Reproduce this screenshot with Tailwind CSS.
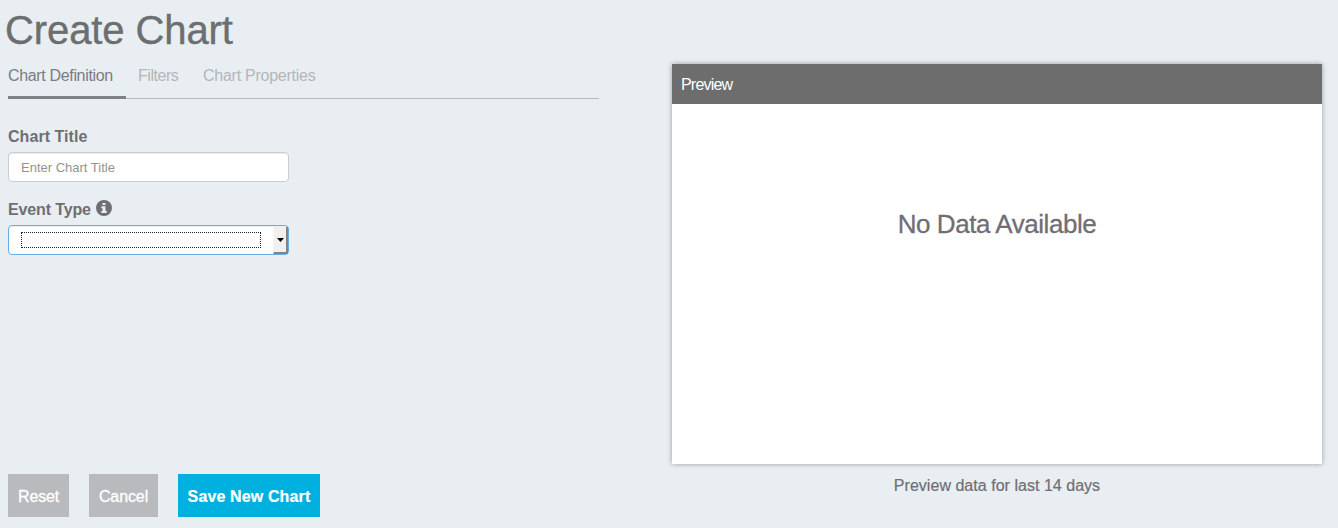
<!DOCTYPE html>
<html lang="en">
<head>
<meta charset="utf-8">
<title>Create Chart</title>
<script src="https://cdn.jsdelivr.net/npm/@tailwindcss/browser@4"></script>
</head>
<body class="h-[528px] overflow-hidden bg-[#e8eef2] font-['Liberation_Sans',Arial,sans-serif] text-base text-[#6f6e73]">
<div class="flex h-full">
  <main class="flex w-[672px] flex-col pl-2">
    <h1 class="-ml-[3px] h-[60px] pt-[5px] text-[40px] leading-[50px] tracking-[-0.1px] whitespace-nowrap text-[#6d6e6f] [-webkit-text-stroke:0.4px_#6d6e6f]">Create Chart</h1>
    <nav class="flex h-[39px] w-[591px] border-b border-[#b5b7ba] leading-[32px] whitespace-nowrap text-[#b5b6ba]">
      <a class="h-[39px] w-[118px] border-b-3 border-[#808187] tracking-[-0.34px] text-[#7b7c82]">Chart Definition</a>
      <a class="ml-3 w-[65px] tracking-[-0.45px]">Filters</a>
      <a class="tracking-[-0.25px]">Chart Properties</a>
    </nav>
    <form class="flex grow flex-col items-start">
      <label class="mt-[26px] h-[27px] leading-6 font-bold tracking-[0.05px]">Chart Title</label>
      <input class="h-[30px] w-[281px] rounded border border-[#cccccc] bg-white px-3 text-[13px] shadow-[inset_0_1px_1px_rgba(0,0,0,0.075)] placeholder:text-[#939393]" placeholder="Enter Chart Title">
      <label class="mt-4 flex h-[27px] gap-[5px] leading-6 font-bold tracking-[-0.13px]">Event Type
        <svg class="mt-[2px] size-4" viewBox="0 0 16 16"><circle cx="8" cy="8" r="8" fill="#6f6e73"/><path d="M6.5 3h3v2h-3zM5.3 6.3h4.2v4.6h1.2v2H5.3v-2h1.2V8.3H5.3z" fill="#e8eef2"/></svg>
      </label>
      <div class="flex h-[30px] w-[281px] items-center justify-between rounded border border-[#66afe9] bg-white pl-3 shadow-[inset_0_1px_1px_rgba(0,0,0,0.075)]">
        <span class="h-4 w-60 border border-dotted border-[#222]"></span>
        <span class="flex h-[27px] w-[15px] items-center justify-center border-r-2 border-b-2 border-[#848484] border-l border-l-[#f5f5f5] bg-[#f0f0f0]">
          <svg class="mt-px h-[4px] w-[7px]" viewBox="0 0 7 4"><path d="M0 0h7L3.5 4z" fill="#000"/></svg>
        </span>
      </div>
      <div class="mt-auto mb-[11px] flex h-[43px] gap-5 text-white">
        <button type="button" class="w-[61px] bg-[#b8babe] pt-0.5 tracking-[-0.2px] [-webkit-text-stroke:0.3px_white]">Reset</button>
        <button type="button" class="w-[69px] bg-[#b8babe] pt-0.5 tracking-[-0.1px] [-webkit-text-stroke:0.3px_white]">Cancel</button>
        <button type="button" class="w-[142px] bg-[#00b0de] pt-0.5 font-bold tracking-[0.13px] whitespace-nowrap [-webkit-text-stroke:0.2px_white]">Save New Chart</button>
      </div>
    </form>
  </main>
  <aside class="w-[650px] pt-16 text-center">
    <section class="h-[400px] bg-white shadow-[0_0_5px_rgba(0,0,0,0.35)]">
      <h2 class="h-10 bg-[#6d6d6d] pl-[9px] text-left leading-[41px] tracking-[-0.8px] text-white">Preview</h2>
      <p class="pt-[103px] text-[26px] leading-[34px] tracking-[-0.45px] [-webkit-text-stroke:0.3px_#6f6e73]">No Data Available</p>
    </section>
    <p class="pt-[10px] leading-6 tracking-[0.03px] [-webkit-text-stroke:0.2px_#6f6e73]">Preview data for last 14 days</p>
  </aside>
</div>
</body>
</html>
